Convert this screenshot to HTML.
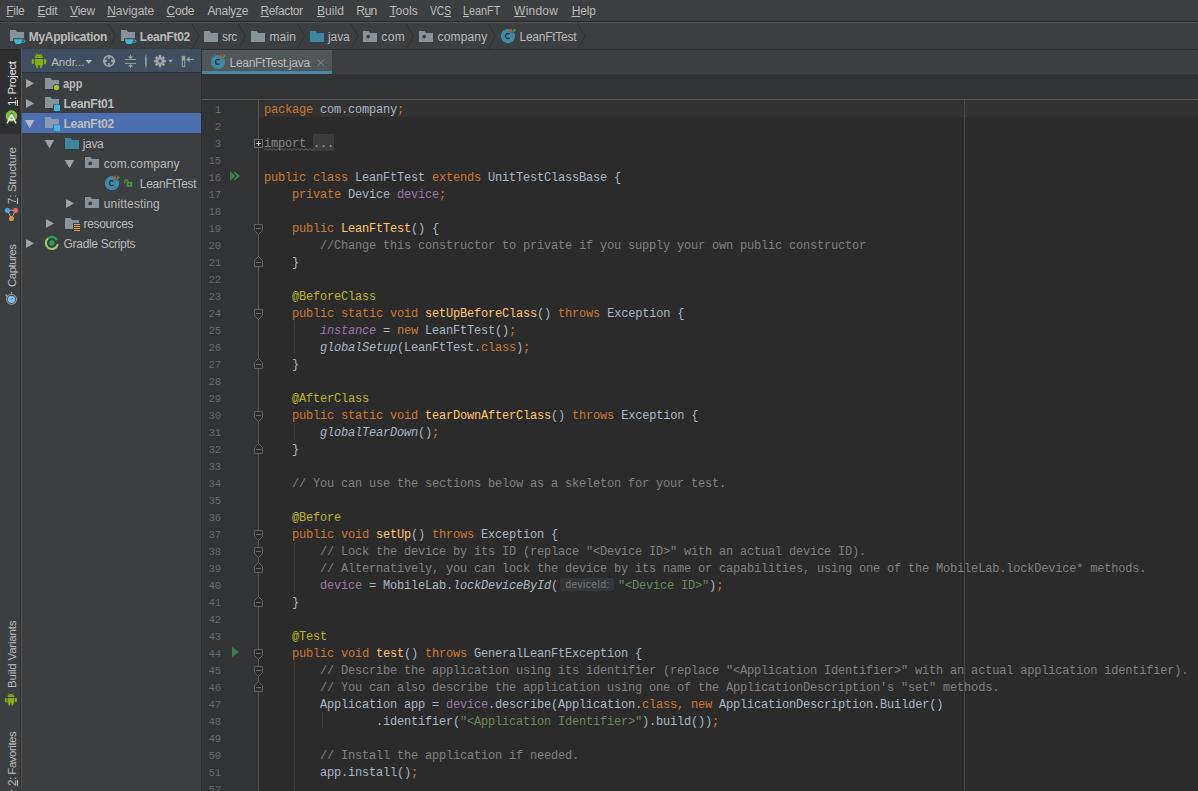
<!DOCTYPE html>
<html>
<head>
<meta charset="utf-8">
<title>LeanFtTest.java</title>
<style>
*{box-sizing:border-box;margin:0;padding:0}
html,body{width:1198px;height:791px;overflow:hidden;background:#3c3f41;font-family:"Liberation Sans",sans-serif;color:#bbbbbb}
div{position:absolute}
.lb{position:absolute;line-height:16px;white-space:nowrap}
.lb u,.vl u{text-decoration:underline;text-underline-offset:0.6px;text-decoration-thickness:1px}
.vl{position:absolute;font-size:11.5px;line-height:16px;white-space:nowrap;transform-origin:0 0;transform:rotate(-90deg)}
#menuline{left:0;top:21px;width:1198px;height:1px;background:#292a2b}
#menuline2{left:0;top:22px;width:1198px;height:1px;background:#525354}
#navline{left:201px;top:49px;width:997px;height:1px;background:#2a2c2e}
#btntop{left:0;top:49px;width:20px;height:1px;background:#232526}
#projbtn{left:0;top:49px;width:20px;height:85px;background:#2d2f30}
#stripline{left:20px;top:49px;width:1px;height:742px;background:#2c2e30;border:0}
#stripline2{left:21px;top:49px;width:1px;height:742px;background:#515456}
#projhead{left:22px;top:49px;width:179px;height:24px;background:#414d60;border-bottom:1px solid #2c3340}
#sel{left:22px;top:113px;width:179px;height:20px;background:#4b6eaf}
#edline{left:201px;top:49px;width:1px;height:742px;background:#2b2d2e}
#tab{left:202px;top:50px;width:130px;height:24px;background:#515658;border-bottom:3px solid #4a879e}
#strip{left:202px;top:74px;width:996px;height:25px;background:#313335}
#stripb{left:202px;top:99px;width:996px;height:1px;background:#555555}
#edbg{left:202px;top:100px;width:996px;height:691px;background:#2b2b2b}
#gutter{left:202px;top:100px;width:56px;height:691px;background:#313335}
#foldline{left:258px;top:100px;width:1px;height:691px;background:#555555}
#margin{left:964px;top:100px;width:1px;height:691px;background:#4a4a4a}
#caretrow{left:259px;top:100px;width:939px;height:17px;background:#323232}
#code{left:264px;top:102px;font-family:"Liberation Mono",monospace;font-size:12px;letter-spacing:-0.2px;line-height:17px;color:#a9b7c6;white-space:pre}
#nums{left:202px;top:102px;width:19.2px;text-align:right;font-family:"Liberation Mono",monospace;font-size:10.67px;letter-spacing:0;line-height:17px;color:#676a6d;white-space:pre}
.k{color:#cc7832}.c{color:#808080}.s{color:#6a8759}.a{color:#bbb529}.m{color:#ffc66d}.f{color:#9876aa}.i{font-style:italic}
.imp{color:#868686}
.fd{color:#9a9a9a}
#foldbg{left:313px;top:134px;width:21px;height:17px;background:#3c3c3c}
.hw{display:inline-block;width:60px;height:17px;vertical-align:top;position:relative}
.hint{position:absolute;left:2px;top:0px;width:54px;height:13px;line-height:13px;padding-left:5.5px;font-family:"Liberation Sans",sans-serif;font-size:10px;letter-spacing:0.45px;color:#787b7e;background:#353637;border-radius:3px}
svg{position:absolute;left:0;top:0}
</style>
</head>
<body>
<div id="menuline"></div><div id="menuline2"></div><div id="navline"></div>
<div id="projbtn"></div><div id="btntop"></div><div id="stripline"></div><div id="stripline2"></div>
<div id="projhead"></div><div id="sel"></div>
<div id="edline"></div><div id="tab"></div><div id="strip"></div><div id="stripb"></div>
<div id="edbg"></div><div id="gutter"></div><div id="caretrow"></div><div id="margin"></div><div id="foldline"></div><div id="foldbg"></div>
<div id="nums">1
2
3
15
16
17
18
19
20
21
22
23
24
25
26
27
28
29
30
31
32
33
34
35
36
37
38
39
40
41
42
43
44
45
46
47
48
49
50
51
52</div>
<svg width="1198" height="791" viewBox="0 0 1198 791">
<path d="M10 30 h5.5 l1.5 2 h7 v9 h-14z" fill="#87939a"/><rect x="13" y="38.3" width="11" height="5" fill="#3c3f41"/><path d="M13.8 39.3 h8.8 l-0.9 3 q-0.4 1.6 -2 1.6 h-3 q-1.6 0 -2 -1.6z" fill="#40b6e0"/><path d="M22.4 40.1 h1.5 a1.1 1.1 0 0 1 0 2.2 h-1.9" fill="none" stroke="#40b6e0" stroke-width="0.9"/>
<path d="M121 30 h5.5 l1.5 2 h7 v9 h-14z" fill="#87939a"/><rect x="124" y="38.3" width="11" height="5" fill="#3c3f41"/><path d="M124.8 39.3 h8.8 l-0.9 3 q-0.4 1.6 -2 1.6 h-3 q-1.6 0 -2 -1.6z" fill="#40b6e0"/><path d="M133.4 40.1 h1.5 a1.1 1.1 0 0 1 0 2.2 h-1.9" fill="none" stroke="#40b6e0" stroke-width="0.9"/>
<path d="M204 31 h5.5 l1.5 2 h7 v9 h-14z" fill="#87939a"/>
<path d="M251 31 h5.5 l1.5 2 h7 v9 h-14z" fill="#87939a"/>
<path d="M310 31 h5.5 l1.5 2 h7 v9 h-14z" fill="#3e86a0"/>
<path d="M363 31 h5.5 l1.5 2 h7 v9 h-14z" fill="#87939a"/><circle cx="368.2" cy="36.6" r="1.9" fill="#3c3f41"/>
<path d="M419 31 h5.5 l1.5 2 h7 v9 h-14z" fill="#87939a"/><circle cx="424.2" cy="36.6" r="1.9" fill="#3c3f41"/>
<circle cx="508" cy="36.1" r="7.1" fill="#408aa8"/><path d="M509.5 34.3 a2.3 2.5 0 1 0 0 3.4" fill="none" stroke="#1f3742" stroke-width="1.35"/><path d="M511.9 27.9 l-3 2.5 l3 2.5z" fill="#e8591c" stroke="#3c3f41" stroke-width="0.4"/><path d="M513.1 27.9 l3 2.5 l-3 2.5z" fill="#48ab2c" stroke="#3c3f41" stroke-width="0.4"/>
<circle cx="218" cy="62" r="7.1" fill="#408aa8"/><path d="M219.5 60.2 a2.3 2.5 0 1 0 0 3.4" fill="none" stroke="#1f3742" stroke-width="1.35"/><path d="M221.9 53.8 l-3 2.5 l3 2.5z" fill="#e8591c" stroke="#515658" stroke-width="0.4"/><path d="M223.1 53.8 l3 2.5 l-3 2.5z" fill="#48ab2c" stroke="#515658" stroke-width="0.4"/>
<path d="M317.5 59.5 l6.5 6.5 M324 59.5 l-6.5 6.5" stroke="#8a8d8f" stroke-width="1" fill="none"/>
<path d="M108.1 23.5 l7.4 13 l-7.4 13" fill="none" stroke="#2f3133" stroke-width="1"/>
<path d="M191.6 23.5 l7.4 13 l-7.4 13" fill="none" stroke="#2f3133" stroke-width="1"/>
<path d="M238.1 23.5 l7.4 13 l-7.4 13" fill="none" stroke="#2f3133" stroke-width="1"/>
<path d="M297.1 23.5 l7.4 13 l-7.4 13" fill="none" stroke="#2f3133" stroke-width="1"/>
<path d="M350.6 23.5 l7.4 13 l-7.4 13" fill="none" stroke="#2f3133" stroke-width="1"/>
<path d="M406.1 23.5 l7.4 13 l-7.4 13" fill="none" stroke="#2f3133" stroke-width="1"/>
<path d="M488.1 23.5 l7.4 13 l-7.4 13" fill="none" stroke="#2f3133" stroke-width="1"/>
<path d="M577.6 23.5 l7.4 13 l-7.4 13" fill="none" stroke="#2f3133" stroke-width="1"/>
<g transform="translate(31.75 52.9) scale(1)" fill="#86ad12"><path d="M3.15 5 a4.1 3.7 0 0 1 8.2 0z"/><rect x="3.15" y="6.1" width="8.2" height="6.2" rx="0.5"/><rect x="0" y="6.1" width="2.35" height="5.2" rx="1.1"/><rect x="12.2" y="6.1" width="2.35" height="5.2" rx="1.1"/><rect x="4.35" y="11.5" width="2" height="3.7" rx="1"/><rect x="8.2" y="11.5" width="2" height="3.7" rx="1"/><path d="M4.5 0.2 l1.1 1.8 M10 0.2 l-1.1 1.8" stroke="#86ad12" stroke-width="0.7" fill="none"/><circle cx="5.5" cy="3.3" r="0.5" fill="#414d60"/><circle cx="9" cy="3.3" r="0.5" fill="#414d60"/></g>
<path d="M85.4 60 h6.8 l-3.4 3.8z" fill="#b8bbbe"/>
<circle cx="109" cy="61" r="5.1" fill="none" stroke="#9da0a3" stroke-width="1.9"/>
<path d="M109 56 v2.9 M109 66 v-2.9 M104 61 h2.9 M114 61 h-2.9" stroke="#9da0a3" stroke-width="2.3"/>
<path d="M125 59.5 h11 M125 63.5 h11" stroke="#9da0a3" stroke-width="0.9"/>
<path d="M130.5 54.8 v3 M130.5 68 v-3" stroke="#9da0a3" stroke-width="1" fill="none"/><path d="M127.8 56.4 h5.4 l-2.7 2.6z M127.8 66.6 h5.4 l-2.7 -2.6z" fill="#9da0a3"/>
<defs><linearGradient id="sg" x1="0" y1="0" x2="0" y2="1"><stop offset="0" stop-color="#9ba4b1" stop-opacity="0"/><stop offset="0.3" stop-color="#9ba4b1" stop-opacity="1"/><stop offset="0.7" stop-color="#9ba4b1" stop-opacity="1"/><stop offset="1" stop-color="#9ba4b1" stop-opacity="0"/></linearGradient></defs>
<rect x="145.1" y="53.4" width="1.6" height="15.8" fill="url(#sg)"/>
<g transform="translate(160 61.1)" fill="#9da0a3"><rect x="-1.25" y="-6.1" width="2.5" height="3.2" transform="rotate(0)"/><rect x="-1.25" y="-6.1" width="2.5" height="3.2" transform="rotate(45)"/><rect x="-1.25" y="-6.1" width="2.5" height="3.2" transform="rotate(90)"/><rect x="-1.25" y="-6.1" width="2.5" height="3.2" transform="rotate(135)"/><rect x="-1.25" y="-6.1" width="2.5" height="3.2" transform="rotate(180)"/><rect x="-1.25" y="-6.1" width="2.5" height="3.2" transform="rotate(225)"/><rect x="-1.25" y="-6.1" width="2.5" height="3.2" transform="rotate(270)"/><rect x="-1.25" y="-6.1" width="2.5" height="3.2" transform="rotate(315)"/><circle r="4.3"/><circle r="1.6" fill="#414d60"/></g>
<path d="M168.1 59.8 h5 l-2.5 3z" fill="#9da0a3"/>
<rect x="182.3" y="56.4" width="2.4" height="10.2" fill="none" stroke="#9da0a3" stroke-width="1"/>
<rect x="181.8" y="55.9" width="3.4" height="4.6" fill="#9da0a3"/>
<path d="M186.2 59.5 l3.4 -2.7 v5.4z" fill="#9da0a3"/><path d="M189 59.5 h4.9" stroke="#9da0a3" stroke-width="1.1"/>
<path d="M26 79 l8 4.5 l-8 4.5z" fill="#9fa2a5"/>
<path d="M45 78 h5.5 l1.5 2 h7 v9 h-14z" fill="#87939a"/><circle cx="56.5" cy="87.5" r="3.6" fill="#3c3f41"/><circle cx="56.5" cy="87.5" r="2.7" fill="#a4c639"/>
<path d="M26 99 l8 4.5 l-8 4.5z" fill="#9fa2a5"/>
<path d="M45 97 h5.5 l1.5 2 h7 v9 h-14z" fill="#87939a"/><rect x="53" y="104.5" width="7" height="7" fill="#3c3f41"/><rect x="54" y="105" width="6" height="6" fill="#40b6e0"/>
<path d="M24.9 120 h9.5 l-4.75 8.3z" fill="#b4b8bf"/>
<path d="M45 117 h5.5 l1.5 2 h7 v9 h-14z" fill="#8a99b4"/><rect x="53" y="124.5" width="7" height="7" fill="#4b6eaf"/><rect x="54" y="125" width="6" height="6" fill="#40b6e0"/>
<path d="M44.7 140 h9.5 l-4.75 8.3z" fill="#9fa2a5"/>
<path d="M65 138 h5.5 l1.5 2 h7 v9 h-14z" fill="#3e86a0"/>
<path d="M64.7 160 h9.5 l-4.75 8.3z" fill="#9fa2a5"/>
<path d="M85 157 h5.5 l1.5 2 h7 v9 h-14z" fill="#87939a"/><circle cx="90.2" cy="163.4" r="1.9" fill="#3c3f41"/>
<circle cx="112" cy="183.2" r="7.1" fill="#408aa8"/><path d="M113.5 181.4 a2.3 2.5 0 1 0 0 3.4" fill="none" stroke="#1f3742" stroke-width="1.35"/><path d="M115.9 175 l-3 2.5 l3 2.5z" fill="#e8591c" stroke="#3c3f41" stroke-width="0.4"/><path d="M117.1 175 l3 2.5 l-3 2.5z" fill="#48ab2c" stroke="#3c3f41" stroke-width="0.4"/>
<rect x="126.6" y="181.8" width="5.5" height="5" fill="#4e913d"/><rect x="128.5" y="183.5" width="1.8" height="1.7" fill="#3c3f41"/><path d="M124.7 183.6 v-2.3 a1.55 1.55 0 0 1 3.1 0 v0.6" fill="none" stroke="#4e913d" stroke-width="1.25"/>
<path d="M66 199 l8 4.5 l-8 4.5z" fill="#9fa2a5"/>
<path d="M85 197 h5.5 l1.5 2 h7 v9 h-14z" fill="#87939a"/><circle cx="90.2" cy="203.4" r="1.9" fill="#3c3f41"/>
<path d="M46 219 l8 4.5 l-8 4.5z" fill="#9fa2a5"/>
<path d="M65 218 h5.5 l1.5 2 h7 v9 h-14z" fill="#87939a"/><rect x="73" y="223" width="7" height="8" fill="#3c3f41"/><rect x="74" y="224" width="6" height="1" fill="#e8a33a"/><rect x="74" y="226" width="6" height="1" fill="#e8a33a"/><rect x="74" y="228" width="6" height="1" fill="#e8a33a"/><rect x="74" y="230" width="6" height="1" fill="#e8a33a"/>
<path d="M26 239 l8 4.5 l-8 4.5z" fill="#9fa2a5"/>
<path d="M48.21 238.27 A6 6 0 1 0 57.77 244.25" fill="none" stroke="#9ccc65" stroke-width="2.1"/><path d="M48.21 238.27 A6 6 0 0 1 56.99 239.82" fill="none" stroke="#22a457" stroke-width="2.3"/><circle cx="51.9" cy="243" r="2.7" fill="#22a457"/>
<circle cx="11.5" cy="116" r="5.8" fill="#7cc244"/><circle cx="11.5" cy="114.4" r="1.5" fill="none" stroke="#5f6a5a" stroke-width="0.9"/><path d="M11.5 114.6 L7 123.3 M11.5 114.6 L16 123.3" stroke="#f2f2f2" stroke-width="1.5" fill="none"/><path d="M8.9 119.3 Q11.5 120.4 14.1 119.3" stroke="#f2f2f2" stroke-width="1.1" fill="none"/>
<path d="M7.4 210.3 h8.2 M7.4 210.3 l4.1 8.2 M15.6 210.3 l-4.1 8.2" stroke="#b8b8b8" stroke-width="0.9" fill="none"/><circle cx="7.4" cy="210.3" r="2.6" fill="#56a0dc"/><circle cx="15.6" cy="210.3" r="2.6" fill="#de6864"/><circle cx="11.5" cy="218.5" r="2.6" fill="#d79646"/>
<circle cx="11.5" cy="299.3" r="5" fill="none" stroke="#9a9a9a" stroke-width="1.1"/><circle cx="11.5" cy="299.3" r="3.6" fill="#78c3f5"/><path d="M11.3 299.6 l1.5 -1.8" stroke="#3a4a55" stroke-width="0.9"/><path d="M11.5 292 v2.4" stroke="#9a9a9a" stroke-width="1.2"/><path d="M5.6 294.6 l1.8 1.9" stroke="#9a9a9a" stroke-width="1.5"/>
<g transform="translate(4.8 692.8) scale(0.835616)" fill="#86ad12"><path d="M3.15 5 a4.1 3.7 0 0 1 8.2 0z"/><rect x="3.15" y="6.1" width="8.2" height="6.2" rx="0.5"/><rect x="0" y="6.1" width="2.35" height="5.2" rx="1.1"/><rect x="12.2" y="6.1" width="2.35" height="5.2" rx="1.1"/><rect x="4.35" y="11.5" width="2" height="3.7" rx="1"/><rect x="8.2" y="11.5" width="2" height="3.7" rx="1"/><path d="M4.5 0.2 l1.1 1.8 M10 0.2 l-1.1 1.8" stroke="#86ad12" stroke-width="0.7" fill="none"/><circle cx="5.5" cy="3.3" r="0.5" fill="#3c3f41"/><circle cx="9" cy="3.3" r="0.5" fill="#3c3f41"/></g>
<rect x="11" y="789.6" width="1.2" height="1.4" fill="#c89b4a"/>
<path d="M230 171 l5.4 5 l-5.4 5z" fill="#417b4e"/><path d="M234.3 171 l5.6 5 l-5.6 5 v-2.7 l2.6 -2.3 l-2.6 -2.3z" fill="#3e8552"/>
<path d="M232 647 l7 5 l-7 5z" fill="#407d4e"/>
<rect x="254.5" y="139.5" width="8" height="8" fill="#2b2b2b" stroke="#6a6d70"/><path d="M256 143.5 h5 M258.5 141 v5" stroke="#c8c8c8" stroke-width="1"/>
<path d="M254.5 224.5 h8 v6 l-4 4 l-4 -4z" fill="#2b2b2b" stroke="#5f6061" stroke-width="1"/><rect x="256" y="228" width="5" height="1" fill="#6c6d6e"/>
<path d="M254.5 309.5 h8 v6 l-4 4 l-4 -4z" fill="#2b2b2b" stroke="#5f6061" stroke-width="1"/><rect x="256" y="313" width="5" height="1" fill="#6c6d6e"/>
<path d="M254.5 411.5 h8 v6 l-4 4 l-4 -4z" fill="#2b2b2b" stroke="#5f6061" stroke-width="1"/><rect x="256" y="415" width="5" height="1" fill="#6c6d6e"/>
<path d="M254.5 530.5 h8 v6 l-4 4 l-4 -4z" fill="#2b2b2b" stroke="#5f6061" stroke-width="1"/><rect x="256" y="534" width="5" height="1" fill="#6c6d6e"/>
<path d="M254.5 547.5 h8 v6 l-4 4 l-4 -4z" fill="#2b2b2b" stroke="#5f6061" stroke-width="1"/><rect x="256" y="551" width="5" height="1" fill="#6c6d6e"/>
<path d="M254.5 649.5 h8 v6 l-4 4 l-4 -4z" fill="#2b2b2b" stroke="#5f6061" stroke-width="1"/><rect x="256" y="653" width="5" height="1" fill="#6c6d6e"/>
<path d="M254.5 666.5 h8 v6 l-4 4 l-4 -4z" fill="#2b2b2b" stroke="#5f6061" stroke-width="1"/><rect x="256" y="670" width="5" height="1" fill="#6c6d6e"/>
<path d="M258.5 256.5 l4 4 v6 h-8 v-6z" fill="#2b2b2b" stroke="#5f6061" stroke-width="1"/><rect x="256" y="262" width="5" height="1" fill="#6c6d6e"/>
<path d="M258.5 358.5 l4 4 v6 h-8 v-6z" fill="#2b2b2b" stroke="#5f6061" stroke-width="1"/><rect x="256" y="364" width="5" height="1" fill="#6c6d6e"/>
<path d="M258.5 443.5 l4 4 v6 h-8 v-6z" fill="#2b2b2b" stroke="#5f6061" stroke-width="1"/><rect x="256" y="449" width="5" height="1" fill="#6c6d6e"/>
<path d="M258.5 562.5 l4 4 v6 h-8 v-6z" fill="#2b2b2b" stroke="#5f6061" stroke-width="1"/><rect x="256" y="568" width="5" height="1" fill="#6c6d6e"/>
<path d="M258.5 596.5 l4 4 v6 h-8 v-6z" fill="#2b2b2b" stroke="#5f6061" stroke-width="1"/><rect x="256" y="602" width="5" height="1" fill="#6c6d6e"/>
<path d="M258.5 681.5 l4 4 v6 h-8 v-6z" fill="#2b2b2b" stroke="#5f6061" stroke-width="1"/><rect x="256" y="687" width="5" height="1" fill="#6c6d6e"/>
<path d="M264 150.5 l2 -2 l2 2 l2 -2 l2 2 l2 -2 l2 2 l2 -2 l2 2 l2 -2 l2 2 l2 -2 l2 2 l2 -2 l2 2 l2 -2 l2 2 l2 -2 l2 2 l2 -2 l2 2 l2 -2 l2 2 l2 -2 l2 2 l2 -2" fill="none" stroke="#6e6e6e" stroke-width="0.9"/>
<rect x="294" y="321" width="1" height="34" fill="#3b3b3b"/>
<rect x="294" y="423" width="1" height="17" fill="#3b3b3b"/>
<rect x="294" y="542" width="1" height="51" fill="#3b3b3b"/>
<rect x="294" y="661" width="1" height="136" fill="#3b3b3b"/>
<rect x="322" y="712" width="1" height="17" fill="#3b3b3b"/>
</svg>
<div id="code"><span class="k">package</span> com.company<span class="k">;</span>

<span class="imp">import</span> <span class="fd">...</span>

<span class="k">public class</span> LeanFtTest <span class="k">extends</span> UnitTestClassBase {
    <span class="k">private</span> Device <span class="f">device</span><span class="k">;</span>

    <span class="k">public</span> <span class="m">LeanFtTest</span>() {
        <span class="c">//Change this constructor to private if you supply your own public constructor</span>
    }

    <span class="a">@BeforeClass</span>
    <span class="k">public static void</span> <span class="m">setUpBeforeClass</span>() <span class="k">throws</span> Exception {
        <span class="f i">instance</span> = <span class="k">new</span> LeanFtTest()<span class="k">;</span>
        <span class="i">globalSetup</span>(LeanFtTest.<span class="k">class</span>)<span class="k">;</span>
    }

    <span class="a">@AfterClass</span>
    <span class="k">public static void</span> <span class="m">tearDownAfterClass</span>() <span class="k">throws</span> Exception {
        <span class="i">globalTearDown</span>()<span class="k">;</span>
    }

    <span class="c">// You can use the sections below as a skeleton for your test.</span>

    <span class="a">@Before</span>
    <span class="k">public void</span> <span class="m">setUp</span>() <span class="k">throws</span> Exception {
        <span class="c">// Lock the device by its ID (replace "&lt;Device ID&gt;" with an actual device ID).</span>
        <span class="c">// Alternatively, you can lock the device by its name or capabilities, using one of the MobileLab.lockDevice* methods.</span>
        <span class="f">device</span> = MobileLab.<span class="i">lockDeviceById</span>(<span class="hw"><span class="hint">deviceId:</span></span><span class="s">"&lt;Device ID&gt;"</span>)<span class="k">;</span>
    }

    <span class="a">@Test</span>
    <span class="k">public void</span> <span class="m">test</span>() <span class="k">throws</span> GeneralLeanFtException {
        <span class="c">// Describe the application using its identifier (replace "&lt;Application Identifier&gt;" with an actual application identifier).</span>
        <span class="c">// You can also describe the application using one of the ApplicationDescription's "set" methods.</span>
        Application app = <span class="f">device</span>.describe(Application.<span class="k">class, new</span> ApplicationDescription.Builder()
                .identifier(<span class="s">"&lt;Application Identifier&gt;"</span>).build())<span class="k">;</span>

        <span class="c">// Install the application if needed.</span>
        app.install()<span class="k">;</span>
</div>
<span class="lb" id="m_File" style="left:6.30px;top:2.84px;font-size:12px;color:#bbbbbb;letter-spacing:-0.290px;"><u>F</u>ile</span>
<span class="lb" id="m_Edit" style="left:37.60px;top:2.84px;font-size:12px;color:#bbbbbb;letter-spacing:-0.251px;"><u>E</u>dit</span>
<span class="lb" id="m_View" style="left:70.10px;top:2.84px;font-size:12px;color:#bbbbbb;letter-spacing:-0.253px;"><u>V</u>iew</span>
<span class="lb" id="m_Navigate" style="left:107.20px;top:2.84px;font-size:12px;color:#bbbbbb;letter-spacing:-0.047px;"><u>N</u>avigate</span>
<span class="lb" id="m_Code" style="left:166.50px;top:2.84px;font-size:12px;color:#bbbbbb;letter-spacing:-0.226px;"><u>C</u>ode</span>
<span class="lb" id="m_Analyze" style="left:207.40px;top:2.84px;font-size:12px;color:#bbbbbb;letter-spacing:-0.288px;">Analy<u>z</u>e</span>
<span class="lb" id="m_Refactor" style="left:260.50px;top:2.84px;font-size:12px;color:#bbbbbb;letter-spacing:-0.395px;"><u>R</u>efactor</span>
<span class="lb" id="m_Build" style="left:317.00px;top:2.84px;font-size:12px;color:#bbbbbb;letter-spacing:0.059px;"><u>B</u>uild</span>
<span class="lb" id="m_Run" style="left:356.30px;top:2.84px;font-size:12px;color:#bbbbbb;letter-spacing:-0.582px;">R<u>u</u>n</span>
<span class="lb" id="m_Tools" style="left:389.40px;top:2.84px;font-size:12px;color:#bbbbbb;letter-spacing:0.097px;"><u>T</u>ools</span>
<span class="lb" id="m_VCS" style="left:430.20px;top:2.84px;font-size:12px;color:#bbbbbb;letter-spacing:0.000px;transform-origin:0 50%;transform:scaleX(0.8507);">VC<u>S</u></span>
<span class="lb" id="m_LeanFT" style="left:463.30px;top:2.84px;font-size:12px;color:#bbbbbb;letter-spacing:0.000px;transform-origin:0 50%;transform:scaleX(0.9015);"><u>L</u>eanFT</span>
<span class="lb" id="m_Window" style="left:514.10px;top:2.84px;font-size:12px;color:#bbbbbb;letter-spacing:0.235px;"><u>W</u>indow</span>
<span class="lb" id="m_Help" style="left:571.70px;top:2.84px;font-size:12px;color:#bbbbbb;letter-spacing:-0.172px;"><u>H</u>elp</span>
<span class="lb" id="n_MyApplication" style="left:28.75px;top:28.84px;font-size:12px;font-weight:bold;color:#bbbbbb;letter-spacing:-0.282px;">MyApplication</span>
<span class="lb" id="n_LeanFt02" style="left:139.70px;top:28.84px;font-size:12px;font-weight:bold;color:#bbbbbb;letter-spacing:-0.298px;">LeanFt02</span>
<span class="lb" id="n_src" style="left:222.00px;top:28.84px;font-size:12px;color:#bbbbbb;letter-spacing:-0.367px;">src</span>
<span class="lb" id="n_main" style="left:269.50px;top:28.84px;font-size:12px;color:#bbbbbb;letter-spacing:0.121px;">main</span>
<span class="lb" id="n_java" style="left:328.00px;top:28.84px;font-size:12px;color:#bbbbbb;letter-spacing:-0.104px;">java</span>
<span class="lb" id="n_com" style="left:381.30px;top:28.84px;font-size:12px;color:#bbbbbb;letter-spacing:0.443px;">com</span>
<span class="lb" id="n_company" style="left:437.50px;top:28.84px;font-size:12px;color:#bbbbbb;letter-spacing:0.171px;">company</span>
<span class="lb" id="n_LeanFtTest" style="left:519.50px;top:28.84px;font-size:12px;color:#bbbbbb;letter-spacing:-0.267px;">LeanFtTest</span>
<span class="lb" id="h_andr" style="left:51.20px;top:54.02px;font-size:11.5px;color:#bbbbbb;letter-spacing:-0.007px;">Andr...</span>
<span class="lb" id="tablbl" style="left:229.50px;top:54.84px;font-size:12px;color:#bbbbbb;letter-spacing:-0.295px;">LeanFtTest.java</span>
<span class="lb" id="t_0" style="left:63.20px;top:75.84px;font-size:12px;font-weight:bold;color:#bbbbbb;letter-spacing:0.000px;transform-origin:0 50%;transform:scaleX(0.9136);">app</span>
<span class="lb" id="t_1" style="left:63.60px;top:95.84px;font-size:12px;font-weight:bold;color:#bbbbbb;letter-spacing:-0.311px;">LeanFt01</span>
<span class="lb" id="t_2" style="left:63.60px;top:115.84px;font-size:12px;font-weight:bold;color:#bbbbbb;letter-spacing:-0.311px;">LeanFt02</span>
<span class="lb" id="t_3" style="left:82.70px;top:135.84px;font-size:12px;color:#bbbbbb;letter-spacing:-0.304px;">java</span>
<span class="lb" id="t_4" style="left:103.80px;top:155.84px;font-size:12px;color:#bbbbbb;letter-spacing:0.109px;">com.company</span>
<span class="lb" id="t_5" style="left:139.80px;top:175.84px;font-size:12px;color:#bbbbbb;letter-spacing:-0.278px;">LeanFtTest</span>
<span class="lb" id="t_6" style="left:103.80px;top:195.84px;font-size:12px;color:#bbbbbb;letter-spacing:0.127px;">unittesting</span>
<span class="lb" id="t_7" style="left:83.50px;top:215.84px;font-size:12px;color:#bbbbbb;letter-spacing:-0.332px;">resources</span>
<span class="lb" id="t_8" style="left:63.60px;top:235.84px;font-size:12px;color:#bbbbbb;letter-spacing:-0.317px;">Gradle Scripts</span>
<span class="vl" id="v_proj" style="left:3.8px;top:106.00px;color:#e6e6e6;letter-spacing:-0.409px"><u>1</u>: Project</span>
<span class="vl" id="v_struct" style="left:3.8px;top:204.20px;color:#bbbbbb;letter-spacing:-0.231px"><u>7</u>: Structure</span>
<span class="vl" id="v_capt" style="left:3.8px;top:287.10px;color:#bbbbbb;letter-spacing:-0.534px">Captures</span>
<span class="vl" id="v_build" style="left:3.8px;top:687.70px;color:#bbbbbb;letter-spacing:-0.208px">Build Variants</span>
<span class="vl" id="v_fav" style="left:3.8px;top:785.70px;color:#bbbbbb;letter-spacing:-0.483px"><u>2</u>: Favorites</span>
</body>
</html>
